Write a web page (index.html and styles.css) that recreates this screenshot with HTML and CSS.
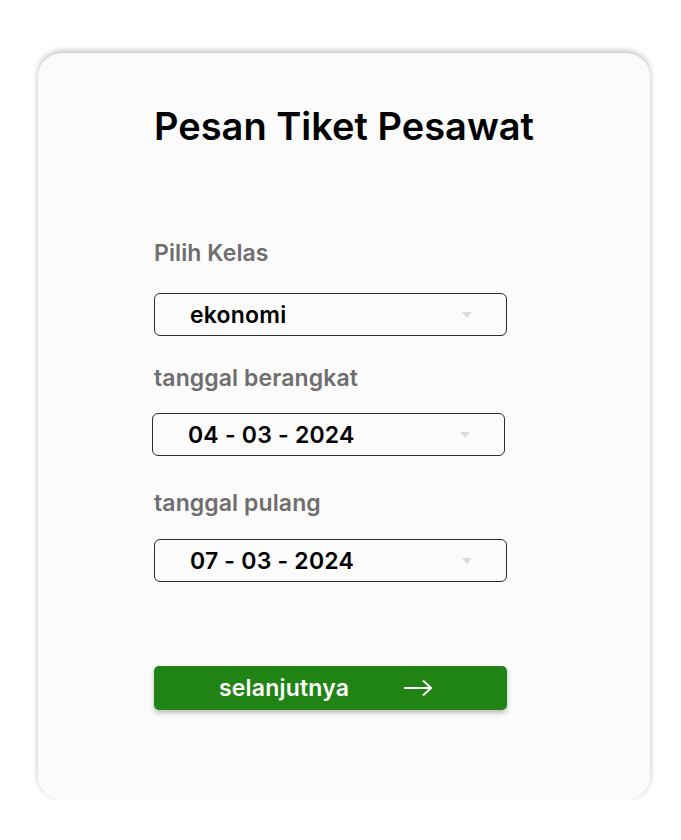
FILE: index.html
```html
<!DOCTYPE html>
<html lang="id">
<head>
<meta charset="utf-8">
<title>Pesan Tiket Pesawat</title>
<link rel="stylesheet" href="styles.css">
</head>
<body>
<main class="card">
  <h1 class="title">Pesan Tiket Pesawat</h1>
  <div class="label label-1">Pilih Kelas</div>
  <div class="field field-1">
    <span class="value">ekonomi</span>
    <span class="caret"></span>
  </div>
  <div class="label label-2">tanggal berangkat</div>
  <div class="field field-2">
    <span class="value">04 - 03 - 2024</span>
    <span class="caret"></span>
  </div>
  <div class="label label-3">tanggal pulang</div>
  <div class="field field-3">
    <span class="value">07 - 03 - 2024</span>
    <span class="caret"></span>
  </div>
  <button class="next">
    <span>selanjutnya</span>
    <svg class="arrow" width="30" height="18" viewBox="0 0 30 18" fill="none" stroke="#fff" stroke-width="2">
      <path d="M1 9H28"/>
      <path d="M20 1.5L28 9L20 16.5"/>
    </svg>
  </button>
</main>
</body>
</html>
```

FILE: styles.css
```css
* { box-sizing: border-box; }
html, body { margin: 0; padding: 0; background: #fff; }
body {
  font-family: Inter, "Noto Sans", sans-serif;
  padding: 53px 0 0 38px;
}
.card {
  width: 612px;
  height: 747px;
  background: #fbfbfb;
  border-radius: 24px;
  box-shadow: 0 -2px 6px rgba(0,0,0,0.26);
  padding: 50px 0 0 116px;
  display: flex;
  flex-direction: column;
  align-items: flex-start;
}
.title {
  margin: 0;
  font-size: 38px;
  font-weight: 600;
  line-height: 46px;
  color: #000;
}
.label {
  font-size: 23px;
  font-weight: 600;
  line-height: 28px;
  color: #6e6e6e;
  letter-spacing: 0.1px;
}
.label-1 { margin-top: 90px; }
.label-2 { margin-top: 28px; }
.label-3 { margin-top: 33px; }
.field {
  width: 353px;
  height: 43px;
  border: 1px solid #2c2c2c;
  border-radius: 6px;
  display: flex;
  align-items: center;
  justify-content: space-between;
  padding: 0 34px 0 35px;
}
.field-1 { margin-top: 26px; }
.field-2 { margin-top: 21px; margin-left: -2px; }
.field-3 { margin-top: 22px; }
.value {
  font-size: 23px;
  font-weight: 600;
  color: #000;
  letter-spacing: 0.2px;
}
.caret {
  width: 0;
  height: 0;
  border-left: 5px solid transparent;
  border-right: 5px solid transparent;
  border-top: 6px solid #dadada;
}
.next {
  margin-top: 84px;
  width: 353px;
  height: 44px;
  border: none;
  border-radius: 5px;
  background: #1f8414;
  box-shadow: 0 3px 5px rgba(0,0,0,0.25);
  color: #fff;
  font-family: inherit;
  font-size: 23px;
  font-weight: 600;
  letter-spacing: 0.2px;
  display: flex;
  align-items: center;
  justify-content: center;
  gap: 54px;
  padding: 0 9px 0 0;
}
.arrow { display: block; }
```
